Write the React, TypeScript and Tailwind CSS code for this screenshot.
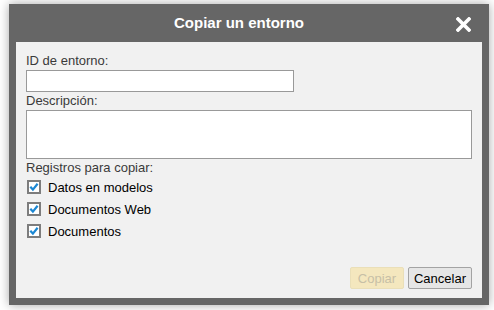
import React from 'react'

function Check({ label }: { label: string }) {
  return (
    <label className="flex h-[22px] items-center">
      <svg width="14" height="14" viewBox="0 0 14 14" className="ml-px mr-[7px]">
        <rect x="1" y="1" width="12" height="12" fill="#fff" stroke="#7d7d7d" strokeWidth="2" />
        <path d="M3.3 6.8 L5.9 9.6 L10.6 3.8" fill="none" stroke="#1b87d3" strokeWidth="2.2" />
      </svg>
      <span className="text-[13px] text-black">{label}</span>
    </label>
  )
}

export default function App() {
  return (
    <div
      className="h-[310px] w-[494px] bg-white pl-[9px] pt-[4px]"
      style={{ fontFamily: '"Liberation Sans", Arial, sans-serif' }}
    >
      <div className="flex h-[301px] w-[480px] flex-col bg-[#666666] shadow-[0_0_10px_rgba(0,0,0,0.35)]">
        <div className="relative flex h-[38px] items-center justify-center pr-[20px]">
          <h2 className="text-[15px] font-bold text-white">Copiar un entorno</h2>
          <svg width="15" height="15" viewBox="0 0 15 15" className="absolute right-[18px] top-[13px]">
            <path d="M2 2 L13 13 M13 2 L2 13" stroke="#fff" strokeWidth="3.6" strokeLinecap="square" />
          </svg>
        </div>
        <div className="mx-[7px] mb-[7px] flex flex-1 flex-col bg-[#f1f1f1] px-[10px] pb-[9px] pt-[11px] text-[13px] leading-[15px] text-[#3a3a3a]">
          <div>ID de entorno:</div>
          <input className="mt-[2px] h-[22px] w-[268px] border border-[#999] bg-white outline-none" />
          <div className="mt-px">Descripción:</div>
          <textarea className="mt-[2px] h-[49px] w-[446px] resize-none border border-[#999] bg-white outline-none" />
          <div className="mt-px">Registros para copiar:</div>
          <div className="mt-px flex flex-col">
            <Check label="Datos en modelos" />
            <Check label="Documentos Web" />
            <Check label="Documentos" />
          </div>
          <div className="mt-auto flex justify-end gap-[4px]">
            <button className="h-[22px] w-[54px] rounded-[2px] border border-[#eadfb8] bg-[#f4e7be] text-[13px] text-[#c7bfa6]">
              Copiar
            </button>
            <button className="h-[22px] w-[64px] rounded-[2px] border border-[#a3a3a3] bg-[#e6e6e6] text-[13px] text-black">
              Cancelar
            </button>
          </div>
        </div>
      </div>
    </div>
  )
}
